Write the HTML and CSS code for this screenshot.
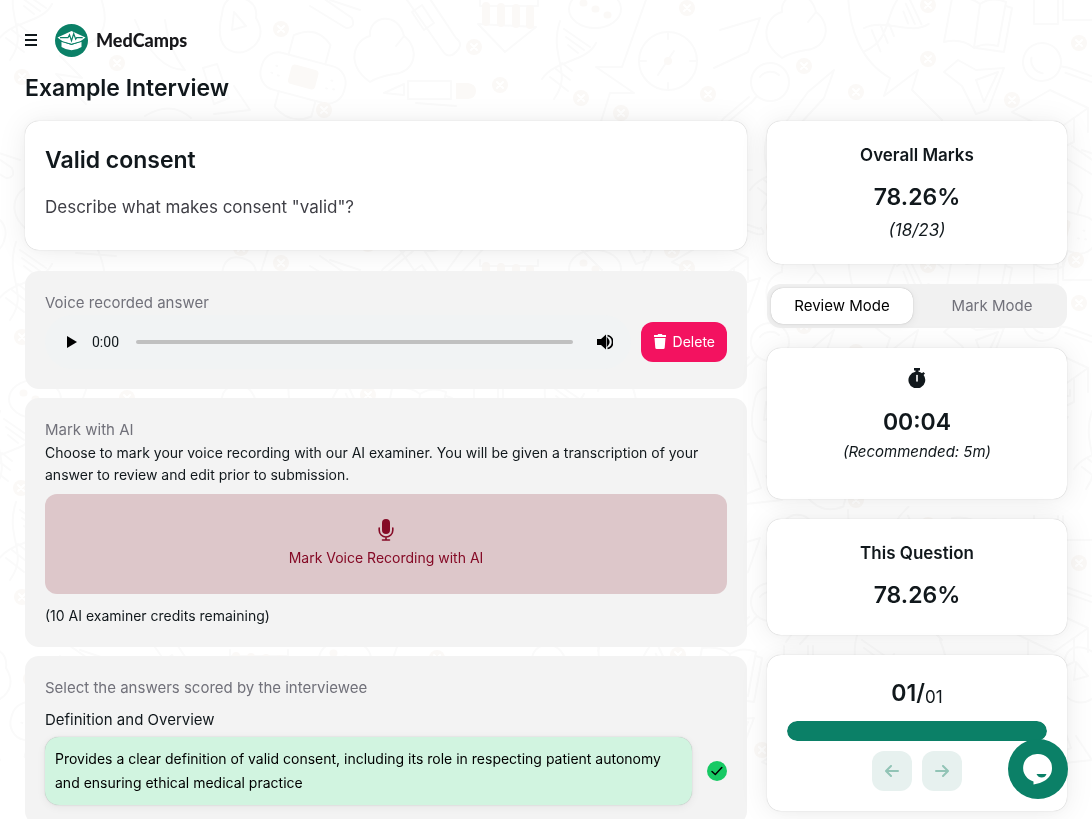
FILE: index.html
```html
<!DOCTYPE html>
<html lang="en">
<head>
<meta charset="utf-8">
<meta name="viewport" content="width=device-width, initial-scale=1">
<title>Example Interview - MedCamps</title>
<link rel="stylesheet" href="styles.css">
</head>
<body>
<svg class="doodles" aria-hidden="true" preserveAspectRatio="xMidYMin slice" viewBox="0 0 1092 819">
  <defs>
    <g id="dna"><path d="M-22 22C-8 2 22 6 32-14M-10 42C10 14-16 0-4-36M-14 20l18 14M-8 12l14 11M-2 6l10 8M4-12l10 8M2-20l18 13M0-28l26 18"/></g>
    <g id="lens"><circle r="19"/><path d="M-10-5A13 13 0 0 1 9-7M-13 14l-6 7M-17 19l-26 22M-21 15l-26 22q-6 8 4 6"/></g>
    <g id="heart"><path d="M-20 38C-45 20-36-4-20-8C-22-28 8-34 14-8C30 4 26 28 4 30C-8 32-14 34-20 38M14-8l-8 10"/></g>
    <g id="book"><path d="M0 30q-12-10-30-6l8-44q18-2 28 6q12-8 26-2l-8 44q-14-4-24 2zM6-14l-6 44M32-12l6 2-8 44-28-4"/></g>
    <g id="pencil"><path d="M-40 6l-20-2 20-9zM-36-8h43v18h-43zM-28 14l40 3"/><path class="doodles__fill" d="M12-6h12q8 1 8 8t-8 8h-12z"/></g>
    <g id="clock"><circle r="29"/><path d="M0-29v7M0 29v-7M-29 0h7M29 0h-7M-10 14L6-10"/><circle class="doodles__fill" r="4"/></g>
    <g id="plaster"><rect x="-43" y="-19" width="86" height="38" rx="17"/><rect class="doodles__fill" x="-14" y="-11" width="28" height="20" rx="4"/><path d="M-20-19v-20q20-16 38 0v20M-20 19v16q20 14 38 0v-16M-29-5h1M-32 3h1M-25 4h1M28-5h1M32 3h1M25 4h1"/></g>
    <g id="cap"><path d="M-38 0L0-22 38-4 4 20zM-22 10v20q20 14 46 0v-24M38-4v24"/></g>
    <g id="dot"><circle class="doodles__fill" r="8"/><path class="doodles__cut" d="M-3-3l6 6M3-3l-6 6"/></g>
    <g id="bolt"><path d="M20-70L-5 0h-26l38 26h-24l-12 38"/></g>
    <g id="set">
      <use href="#dna" x="20" y="18"/><use href="#heart" x="390" y="44"/><use href="#pencil" x="444" y="89"/>
      <path d="M400-10l42 60q6 10 14 2t0-14L424-10zM412 12l10-7 12 18-10 7z"/>
      <path d="M480 0v6h58V0M478 24l58 3-31 25z"/>
      <path class="doodles__stripe" d="M486 6v16M501 7v16M516 8v16M530 9v16"/>
      <use href="#dna" x="564" y="57"/><ellipse cx="595" cy="9" rx="26" ry="19"/>
      <path class="doodles__dots" d="M583 3h1M595 9h1M607 15h1"/>
      <use href="#bolt" x="627" y="67"/><use href="#clock" x="668" y="61"/>
      <path d="M222 14q2-20 20-16 16 4 14 20 10 16-2 28-14 12-28 2-10-10-4-34zM234 12l-2 18 14-4zM310 6l36 22q10 0 6-10L320-4M330 0l30 10"/>
      <use href="#plaster" transform="translate(303 78) rotate(15)"/>
      <path d="M98-10q18 44-12 54M135 20q20 50 50 50q-16-20-20-50M203 68l14-4 12 34-15 6zM214 114l36-4-16-24M60 56l22 22-26-4 30 30M145 116q26-16 46 2"/>
      <path d="M720 30l40-12-12 34-34 16"/><use href="#heart" x="802" y="20"/>
      <use href="#lens" x="770" y="82"/><path d="M786 122l22-30 26-22-10 28-24 26M848-10c0 40 14 72 42 88l-6 18 34-26-6 20 30 30"/>
      <use href="#dna" transform="translate(894 20) rotate(30)"/><use href="#book" x="974" y="18"/>
      <path d="M1034-4v28h24V-4M1063-4v24h29M944 72l14-12 18 10 28-2-16 42-12 4-14-28zM976 80l22-8-14 30z"/>
      <use href="#lens" transform="translate(1042 62) rotate(-120)"/><use href="#cap" x="1050" y="112"/>
      <use href="#dot" x="22" y="77"/><use href="#dot" x="117" y="63"/><use href="#dot" x="281" y="29"/><use href="#dot" x="324" y="110"/>
      <use href="#dot" x="474" y="47"/><use href="#dot" x="500" y="85"/><use href="#dot" x="581" y="98"/><use href="#dot" x="687" y="8"/><use href="#dot" x="708" y="94"/><use href="#dot" x="621" y="113"/>
      <use href="#dot" x="804" y="66"/><use href="#dot" x="856" y="92"/><use href="#dot" x="928" y="59"/><use href="#dot" x="928" y="5"/><use href="#dot" x="1012" y="100"/><use href="#dot" x="1079" y="43"/>
    </g>
  </defs>
  <use href="#set"/>
  <use href="#set" x="-340" y="150"/><use href="#set" x="752" y="150"/>
  <use href="#set" y="260"/>
  <use href="#set" x="-560" y="390"/><use href="#set" x="532" y="390"/>
  <use href="#set" y="520"/>
  <use href="#set" x="-250" y="650"/><use href="#set" x="842" y="650"/>
</svg>

<div class="page">
  <header class="header">
    <button class="menu" type="button" aria-label="Menu">
      <svg width="12" height="12" viewBox="0 0 12 12"><path d="M0 1h12M0 6h12M0 11h12" stroke="#11181c" stroke-width="2"/></svg>
    </button>
    <a class="brand" href="#">
      <svg width="33" height="33" viewBox="0 0 33 33" aria-hidden="true">
        <circle cx="16.500" cy="16.500" r="16.500" fill="#0b8067"/>
        <path d="M2.500 13.500L16.500 7l14 6.500-6 4.500-8 2-8-2z" fill="#fff"/>
        <path d="M5 13.700h8l1.500-3 2 6 2.200-7 2 5.500 1-1.500h6" fill="none" stroke="#0b8067" stroke-width="1.200"/>
        <path d="M6.500 17.500l10 3.500 10-3.500v5.500q-10 6.500-20 0z" fill="#fff"/>
        <path d="M6 17.300l10.500 3 10.500-3" fill="none" stroke="#0b8067" stroke-width="1"/>
      </svg>
      <span>MedCamps</span>
    </a>
  </header>
  <h1 class="page-title">Example Interview</h1>

  <div class="layout">
    <main class="column column--main">
      <section class="card question">
        <h2 class="question__title">Valid consent</h2>
        <p class="question__text">Describe what makes consent "valid"?</p>
      </section>

      <div class="panels">
        <section class="panel">
          <p class="label">Voice recorded answer</p>
          <div class="recording">
            <div class="player">
              <button class="player__button" type="button" aria-label="Play"><svg width="10" height="12" viewBox="0 0 10 12"><path d="M0 0l10 6-10 6z"/></svg></button>
              <span class="player__time">0:00</span>
              <input class="player__seek" type="range" min="0" max="100" value="0" aria-label="Seek">
              <button class="player__button" type="button" aria-label="Mute"><svg width="16" height="16" viewBox="0 0 16 16"><path d="M0 5h4l5-4.500v15L4 11H0z"/><path d="M10.500 5q2.500 3 0 6zM10.500 1.500a6.700 6.700 0 0 1 0 13" fill="none" stroke="#000" stroke-width="1.700"/></svg></button>
            </div>
            <button class="delete" type="button">
              <svg width="14" height="16" viewBox="0 0 14 16"><path d="M4.500 1l.7-1h3.600l.7 1H13v2H1V1zM1.500 4h11l-.8 9.800Q11.600 15 10.300 15H3.700q-1.300 0-1.400-1.200z" fill="#fff"/></svg>
              Delete
            </button>
          </div>
        </section>

        <section class="panel">
          <p class="label">Mark with AI</p>
          <p class="copy">Choose to mark your voice recording with our AI examiner. You will be given a transcription of your answer to review and edit prior to submission.</p>
          <button class="ai-button" type="button">
            <svg width="16" height="24" viewBox="0 0 16 24"><rect x="4" y="1" width="8" height="15" rx="4"/><path d="M1.200 10v2.200a6.800 6.800 0 0 0 13.600 0V10M8 19v3M4.500 22h7" fill="none" stroke="#850a26" stroke-width="1.600" stroke-linecap="round"/></svg>
            Mark Voice Recording with AI
          </button>
          <p class="copy">(10 AI examiner credits remaining)</p>
        </section>

        <section class="panel">
          <p class="label">Select the answers scored by the interviewee</p>
          <h3 class="group-title">Definition and Overview</h3>
          <div class="answer">
            <button class="answer__text" type="button">Provides a clear definition of valid consent, including its role in respecting patient autonomy and ensuring ethical medical practice</button>
            <svg class="answer__tick" width="20" height="20" viewBox="0 0 20 20" role="img" aria-label="Scored"><circle cx="10" cy="10" r="10" fill="#17c964"/><path d="M5 10.500l3.300 3L14.800 6.500" fill="none" stroke="#000" stroke-width="1.500" stroke-linecap="round" stroke-linejoin="round"/></svg>
          </div>
        </section>
      </div>
    </main>

    <aside class="column column--side">
      <section class="card stat">
        <h2 class="stat__title">Overall Marks</h2>
        <p class="stat__value">78.26%</p>
        <p class="stat__note">(18/23)</p>
      </section>

      <div class="tabs" role="tablist">
        <button class="tab tab--active" type="button" role="tab" aria-selected="true">Review Mode</button>
        <button class="tab" type="button" role="tab" aria-selected="false">Mark Mode</button>
      </div>

      <section class="card timer">
        <svg width="18" height="20" viewBox="0 0 18 20" aria-hidden="true"><path d="M6 0h6v2.500h-1.500v1.200q2 .3 3.500 1.500l1.300-1.300 1.700 1.600-1.400 1.500A8.400 8.400 0 1 1 7.500 3.700V2.500H6z" fill="#11181c"/><path d="M9 7.500v5.500" stroke="#fff" stroke-width="1.600" stroke-linecap="round"/></svg>
        <p class="timer__value">00:04</p>
        <p class="timer__note">(Recommended: 5m)</p>
      </section>

      <section class="card stat">
        <h2 class="stat__title">This Question</h2>
        <p class="stat__value">78.26%</p>
      </section>

      <section class="card pager">
        <p class="pager__count">01/<sub>01</sub></p>
        <div class="progress" role="progressbar" aria-label="Progress" aria-valuenow="100" aria-valuemin="0" aria-valuemax="100"><div class="progress__bar" style="width:100%"></div></div>
        <div class="pager__buttons">
          <button class="arrow" type="button" aria-label="Previous" disabled><svg width="14" height="12" viewBox="0 0 14 12"><path d="M13 6H1.500M6 1L1 6l5 5"/></svg></button>
          <button class="arrow" type="button" aria-label="Next" disabled><svg width="14" height="12" viewBox="0 0 14 12"><path d="M1 6h11.500M8 1l5 5-5 5"/></svg></button>
        </div>
      </section>
    </aside>
  </div>
</div>

<button class="chat" type="button" aria-label="Open chat">
  <svg width="60" height="60" viewBox="0 0 60 60"><path d="M30 15a14 14 0 0 1 14 14c0 6-3 10-7 12.500-3 2-7 3-11.500 4v-3A14 14 0 0 1 30 15z" fill="#fff"/><path d="M28.500 35h10q-1.200 3.500-4.800 3.500T28.500 35z" fill="#0b8067"/></svg>
</button>
</body>
</html>
```

FILE: styles.css
```css
* { box-sizing: border-box; }
html { scrollbar-width: none; }
body {
  margin: 0;
  background: #fff;
  color: #11181c;
  font-family: Inter, "Liberation Sans", sans-serif;
  font-size: 15px;
  line-height: 24px;
}
h1, h2, h3, p { margin: 0; }
button { font: inherit; color: inherit; border: 0; padding: 0; background: none; cursor: pointer; }
svg { display: block; flex: none; }

.doodles {
  position: fixed;
  inset: 0;
  width: 100%;
  height: 100%;
  z-index: -1;
  fill: none;
  stroke: #fafafa;
  stroke-width: 2;
  stroke-linecap: round;
  stroke-linejoin: round;
}
.doodles__fill { fill: #fbf9f7; stroke: none; }
.doodles__cut { stroke: #fff; }
.doodles__stripe { stroke: #fbf9f7; stroke-width: 8; }
.doodles__dots { stroke: #fbf9f7; stroke-width: 7; }

.page { padding: 20px 25px 0; overflow: hidden; }
.header { display: flex; align-items: center; gap: 18px; height: 40px; }
.brand { display: flex; align-items: center; gap: 8px; color: #18181b; font-family: Lato, sans-serif; font-size: 18px; font-weight: 900; text-decoration: none; }
.page-title { margin: 12px 0 16px; font-size: 23px; line-height: 33px; font-weight: 600; }

.layout { display: grid; grid-template-columns: minmax(0, 1fr) 300px; gap: 20px; }
.column { display: flex; flex-direction: column; gap: 20px; }
.column--main { gap: 21px; }
.card {
  padding: 20px;
  border-radius: 14px;
  background: #fff;
  box-shadow: 0 0 15px rgba(0, 0, 0, .03), 0 2px 30px rgba(0, 0, 0, .08), 0 0 1px rgba(0, 0, 0, .3);
}
.question__title { font-size: 23px; line-height: 38px; font-weight: 600; }
.question__text { padding: 14px 0 9px; color: #3f3f46; font-size: 17px; line-height: 28px; }

.panels { display: flex; flex-direction: column; gap: 9px; }
.panel { padding: 20px; border-radius: 14px; background: #f3f3f3; }
.label { color: #71717a; }
.recording { display: flex; align-items: center; gap: 10px; }
.player { display: flex; flex: 1; align-items: center; height: 54px; padding: 0 18px 0 22px; border-radius: 27px; background: #f1f3f4; font-family: Roboto, sans-serif; font-size: 14px; }
.player__time { margin: 0 17px 0 15px; }
.player__seek { flex: 1; min-width: 0; height: 4px; margin: 0 24px 0 0; border-radius: 2px; background: #c0c0c0; appearance: none; }
.player__seek::-webkit-slider-thumb { appearance: none; width: 0; height: 0; }
.delete { display: flex; align-items: center; gap: 6px; height: 40px; padding: 0 12px; border-radius: 12px; background: #f31260; color: #fff; font-size: 14px; }
.copy { font-size: 14px; line-height: 22px; }
.ai-button { display: flex; flex-direction: column; align-items: center; justify-content: center; gap: 4px; width: 100%; height: 100px; margin: 8px 0 11px; border-radius: 12px; background: #ddc7ca; color: #850a26; fill: #850a26; font-size: 14px; }
.group-title { margin: 8px 0 5px; font-size: 15px; font-weight: 400; }
.answer { display: flex; align-items: center; gap: 15px; }
.answer__text { flex: 1; padding: 10px; border-radius: 14px; background: #d1f4e0; color: #000; font-size: 14px; text-align: left; box-shadow: 0 0 5px rgba(0, 0, 0, .02), 0 2px 10px rgba(0, 0, 0, .06), 0 0 1px rgba(0, 0, 0, .3); }

.stat { text-align: center; }
.stat__title { font-size: 17px; line-height: 28px; font-weight: 600; }
.stat__value { padding: 10px 0 2px; font-size: 23px; line-height: 36px; font-weight: 600; }
.stat__note { font-size: 17px; line-height: 27px; font-style: italic; }
.tabs { display: flex; gap: 8px; padding: 4px; border-radius: 14px; background: #f1f1f1; }
.tab { flex: 1; height: 36px; border-radius: 12px; color: #71717a; }
.tab--active { background: #fff; color: #000; box-shadow: 0 0 5px rgba(0, 0, 0, .02), 0 2px 10px rgba(0, 0, 0, .06), 0 0 1px rgba(0, 0, 0, .3); }
.timer { display: flex; flex-direction: column; align-items: center; padding-bottom: 35px; }
.timer__value { margin-top: 16px; font-size: 23px; line-height: 36px; font-weight: 600; }
.timer__note { font-style: italic; }
.pager { display: flex; flex-direction: column; align-items: center; gap: 10px; }
.pager__count { font-size: 23px; line-height: 36px; font-weight: 600; }
.pager__count sub { font-size: 17px; font-weight: 400; line-height: 0; vertical-align: -2px; }
.progress { width: 100%; height: 20px; border-radius: 10px; background: #e4e4e7; overflow: hidden; }
.progress__bar { height: 100%; border-radius: 10px; background: #0b8067; }
.pager__buttons { display: flex; gap: 10px; }
.arrow { display: grid; place-items: center; width: 40px; height: 40px; border-radius: 12px; background: #e7f1ef; }
.arrow path { fill: none; stroke: #92c4b6; stroke-width: 2; stroke-linecap: round; stroke-linejoin: round; }
.chat { position: fixed; right: 24px; bottom: 20px; width: 60px; height: 60px; border-radius: 50%; background: #0b8067; }
```
